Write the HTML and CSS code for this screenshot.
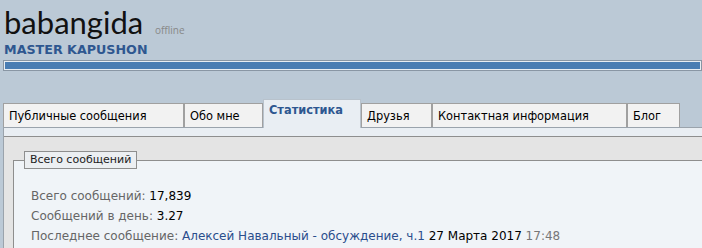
FILE: index.html
```html
<!DOCTYPE html>
<html lang="ru">
<head>
    <meta charset="UTF-8">
    <title>babangida - профиль</title>
    <link rel="stylesheet" href="styles.css">
</head>
<body>
    <div class="profile-head">
        <div class="username">
            <span class="name">babangida</span>
            <span class="status">offline</span>
        </div>
        <div class="usertitle">MASTER KAPUSHON</div>
        <div class="rep-bar"><div class="rep-fill"></div></div>
    </div>

    <ul class="tabs">
        <li class="tab tab-public">Публичные сообщения</li>
        <li class="tab tab-about">Обо мне</li>
        <li class="tab tab-stats active">Статистика</li>
        <li class="tab tab-friends">Друзья</li>
        <li class="tab tab-contact">Контактная информация</li>
        <li class="tab tab-blog">Блог</li>
    </ul>

    <div class="tab-panel">
        <div class="block">
            <fieldset class="stats">
                <legend>Всего сообщений</legend>
                <ul class="stat-list">
                    <li><span class="label">Всего сообщений:</span> 17,839</li>
                    <li><span class="label">Сообщений в день:</span> 3.27</li>
                    <li><span class="label">Последнее сообщение:</span> <a href="#">Алексей Навальный - обсуждение, ч.1</a> 27 Марта 2017 <span class="time">17:48</span></li>
                </ul>
            </fieldset>
        </div>
    </div>
</body>
</html>
```

FILE: styles.css
```css
body {
    margin: 0;
    padding: 0;
    background-color: #bbc9d6;
    font-family: Tahoma, "DejaVu Sans", sans-serif;
    font-size: 12px;
    color: #000;
    overflow: hidden;
}
.profile-head {
    padding: 0 0 0 3px;
}
.username {
    height: 40px;
    line-height: 44px;
    padding-left: 1px;
}
.username .name {
    font-family: Lato, "Open Sans", sans-serif;
    font-size: 31px;
    color: #111;
}
.username .status {
    font-family: "Open Sans", sans-serif;
    font-size: 10px;
    color: #888;
    margin-left: 8px;
}
.usertitle {
    font-weight: bold;
    color: #2e5790;
    font-size: 12.7px;
    padding-left: 1px;
    height: 20px;
    line-height: 20px;
}
.rep-bar {
    height: 9px;
    border: 1px solid #8996a4;
    outline: 1px solid #e8edf2;
    outline-offset: -2px;
    background-color: #4a7db3;
}
.tabs {
    list-style: none;
    margin: 28px 0 0 3px;
    padding: 0;
    display: flex;
    align-items: flex-end;
    height: 28px;
    border-bottom: 1px solid #9aa3ac;
    font-size: 11.4px;
}
.tab {
    box-sizing: border-box;
    height: 24px;
    line-height: 24px;
    padding-left: 5px;
    background-color: #f2f2f2;
    border: 1px solid #a0a0a0;
    border-bottom: none;
    white-space: nowrap;
}
.tab.active {
    height: 29px;
    line-height: 20px;
    margin-bottom: -1px;
    background-color: #e9eef3;
    color: #2e5790;
    font-weight: bold;
    border-color: #b8c2cc;
}
.tab-public { width: 181px; }
.tab-about { width: 79px; }
.tab-stats { width: 98px; }
.tab-friends { width: 71px; }
.tab-contact { width: 195px; }
.tab-blog { width: 53px; }
.tab-panel {
    margin-left: 3px;
    padding-top: 8px;
    background-color: #e9eef3;
    border-left: 1px solid #9aa3ac;
}
.block {
    border-top: 1px solid #8e8e8e;
    background-color: #e4e4e4;
    padding: 14px 0 0 9px;
    height: 200px;
}
.stats {
    margin: 0;
    padding: 17px 0 0 17px;
    border: 1px solid #8e8e8e;
    border-right: none;
    background-color: #f0f4f8;
    height: 200px;
}
.stats legend {
    margin-left: -7px;
    padding: 0 5px;
    height: 16px;
    line-height: 16px;
    font-size: 11px;
    background-color: #eceff2;
    border: 1px solid #8e8e8e;
    color: #222;
}
.stat-list {
    list-style: none;
    margin: 0;
    padding: 0;
}
.stat-list li {
    line-height: 20px;
}
.stat-list .label {
    color: #666;
}
.stat-list a {
    color: #2a4d8c;
    text-decoration: none;
}
.stat-list .time {
    color: #777;
}
```
